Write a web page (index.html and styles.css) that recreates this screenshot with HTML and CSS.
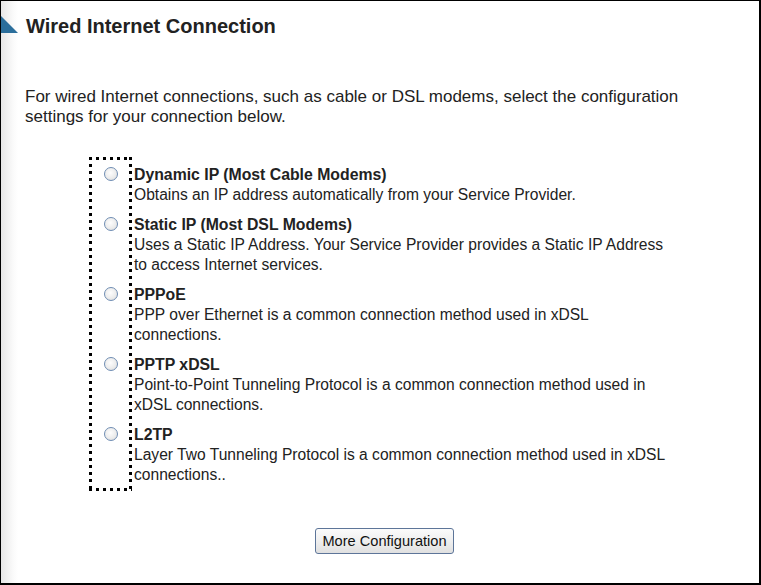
FILE: index.html
```html
<!DOCTYPE html>
<html>
<head>
<meta charset="utf-8">
<link rel="stylesheet" href="styles.css">
</head>
<body>
<div class="frame">
  <div class="heading">
    <svg class="tri" width="17" height="17" viewBox="0 0 17 17"><polygon points="0,0 17,17 0,17" fill="#2b6e9b"/></svg>
    <h1 class="title">Wired Internet Connection</h1>
  </div>
  <p class="intro">For wired Internet connections, such as cable or DSL modems, select the configuration settings for your connection below.</p>
  <div class="options">
    <label class="opt">
      <input type="radio" name="wan" class="radio">
      <span class="opt-text"><b class="opt-title">Dynamic IP (Most Cable Modems)</b><span class="opt-desc">Obtains an IP address automatically from your Service Provider.</span></span>
    </label>
    <label class="opt">
      <input type="radio" name="wan" class="radio">
      <span class="opt-text"><b class="opt-title">Static IP (Most DSL Modems)</b><span class="opt-desc">Uses a Static IP Address. Your Service Provider provides a Static IP Address to access Internet services.</span></span>
    </label>
    <label class="opt">
      <input type="radio" name="wan" class="radio">
      <span class="opt-text"><b class="opt-title">PPPoE</b><span class="opt-desc">PPP over Ethernet is a common connection method used in xDSL connections.</span></span>
    </label>
    <label class="opt">
      <input type="radio" name="wan" class="radio">
      <span class="opt-text"><b class="opt-title">PPTP xDSL</b><span class="opt-desc">Point-to-Point Tunneling Protocol is a common connection method used in xDSL connections.</span></span>
    </label>
    <label class="opt">
      <input type="radio" name="wan" class="radio">
      <span class="opt-text"><b class="opt-title">L2TP</b><span class="opt-desc">Layer Two Tunneling Protocol is a common connection method used in xDSL connections..</span></span>
    </label>
  </div>
  <div class="actions">
    <button class="btn" type="button">More Configuration</button>
  </div>
</div>
</body>
</html>
```

FILE: styles.css
```css
html, body {
  margin: 0;
  padding: 0;
  background: #fff;
}
.frame {
  box-sizing: border-box;
  width: 761px;
  height: 585px;
  border-top: 1px solid #000;
  border-left: 1px solid #000;
  border-right: 2px solid #000;
  border-bottom: 2px solid #000;
  background: linear-gradient(to right, #e6e6e6 0, #fafafa 12px, #fff 17px);
  font-family: "Liberation Sans", Arial, sans-serif;
  color: #222;
  padding-top: 14px;
}
.heading {
  display: flex;
  align-items: flex-start;
  gap: 8px;
}
.tri {
  display: block;
  margin-top: 1px;
  flex: none;
}
.title {
  margin: 0;
  font-size: 20px;
  line-height: 22px;
  font-weight: bold;
  color: #222;
}
.intro {
  margin: 50px 40px 0 24px;
  font-size: 17px;
  line-height: 20px;
}
.options {
  position: relative;
  margin: 38px 0 0 103px;
  width: 572px;
  display: flex;
  flex-direction: column;
  gap: 10px;
}
.options::before {
  content: "";
  position: absolute;
  left: -15px;
  top: -8px;
  width: 43px;
  bottom: -6px;
  background:
    repeating-linear-gradient(to right, #000 0 3px, transparent 3px 7px) top left / 100% 3px no-repeat,
    repeating-linear-gradient(to right, #000 0 3px, transparent 3px 7px) bottom left / 100% 3px no-repeat,
    repeating-linear-gradient(to bottom, #000 0 3px, transparent 3px 7px) top left / 3px 100% no-repeat,
    repeating-linear-gradient(to bottom, #000 0 3px, transparent 3px 7px) top right / 3px 100% no-repeat;
  pointer-events: none;
}
.opt {
  display: flex;
  align-items: flex-start;
  font-size: 15.6px;
  line-height: 20px;
}
.radio {
  appearance: none;
  -webkit-appearance: none;
  box-sizing: border-box;
  width: 14px;
  height: 14px;
  margin: 2px 16px 0 0;
  border: 1px solid #6f8db3;
  border-radius: 50%;
  background: radial-gradient(circle at 45% 40%, #fdfdfd 0, #ececec 55%, #d6d6d6 100%);
  flex: none;
}
.opt-text {
  display: flex;
  flex-direction: column;
  width: 542px;
}
.opt-title {
  font-weight: bold;
  font-size: 15.8px;
}
.actions {
  display: flex;
  justify-content: center;
  margin-top: 43px;
  padding-left: 9px;
}
.btn {
  box-sizing: border-box;
  height: 26px;
  padding: 0 6px;
  font-family: "Liberation Sans", Arial, sans-serif;
  font-size: 14.6px;
  color: #111;
  border: 1px solid #5d7599;
  border-radius: 3px;
  background: linear-gradient(to bottom, #fbfbfb 0, #efefef 50%, #e0e0e0 100%);
}
```
